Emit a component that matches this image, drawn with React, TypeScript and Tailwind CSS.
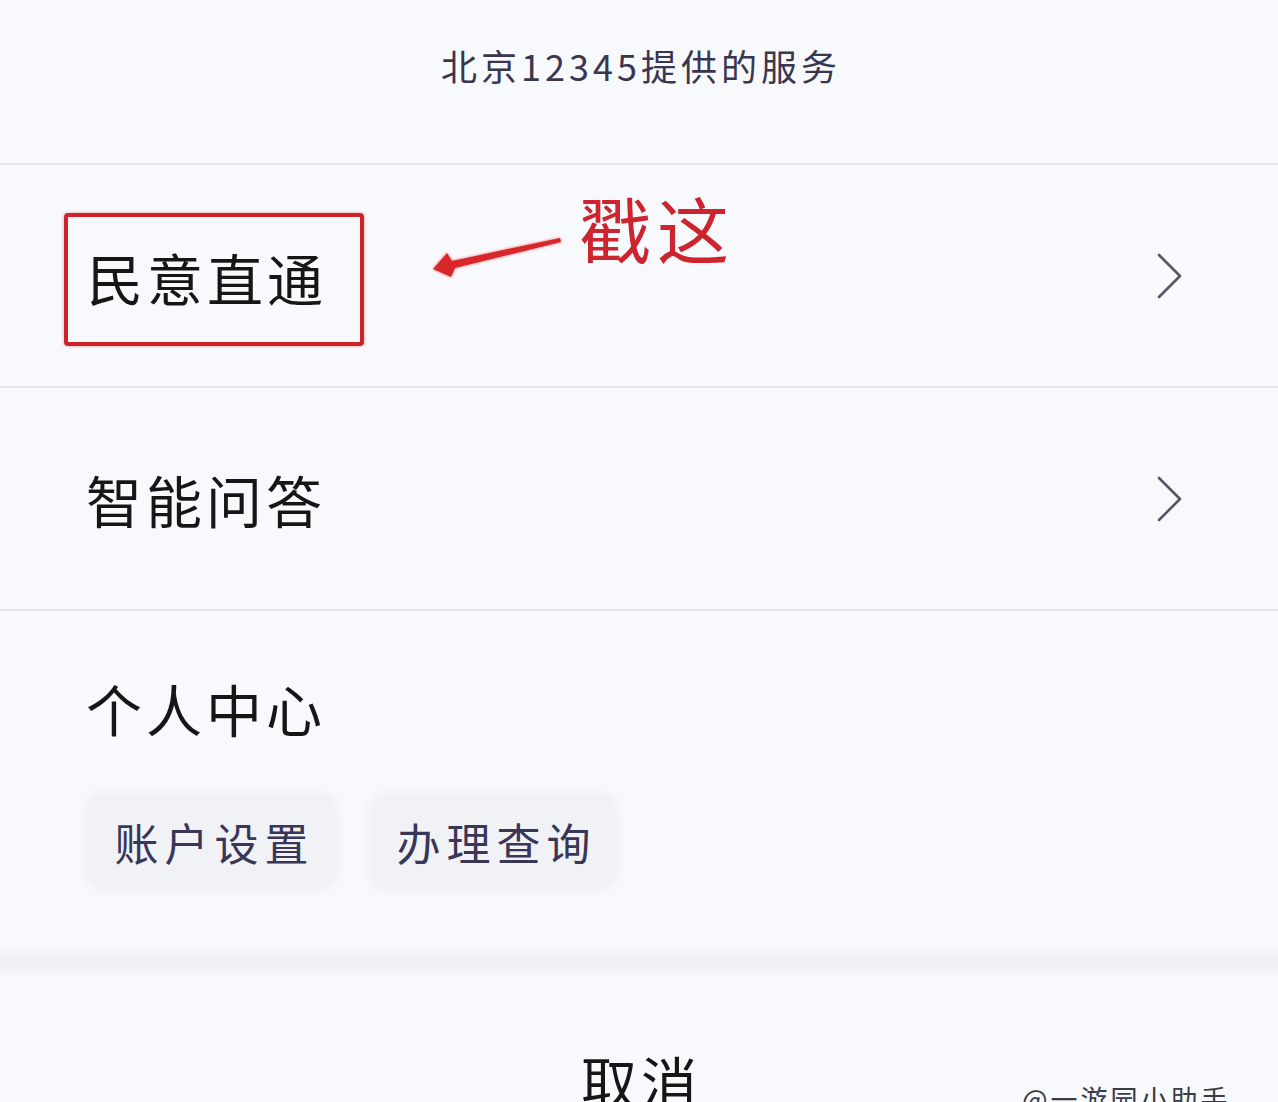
import React from "react";

const font = { fontFamily: '"Noto Sans CJK SC", "Noto Sans", sans-serif' };

function Chevron() {
  return (
    <svg width="28" height="46" viewBox="0 0 28 46" className="shrink-0">
      <path d="M3 2 L24 23 L3 44" fill="none" stroke="#5a5566" strokeWidth="2.6" strokeLinecap="round" strokeLinejoin="round" />
    </svg>
  );
}

export default function App() {
  return (
    <div
      className="relative w-[1278px] h-[1102px] overflow-hidden bg-[#f8f9fc] text-[#161616]"
      style={font}
    >
      {/* Header */}
      <div className="h-[165px] border-b-2 border-[#e3e6ec] flex justify-center pt-[47px]">
        <div className="text-[36px] leading-[36px] tracking-[4px] pl-[4px] text-[#3a3650]">北京12345提供的服务</div>
      </div>

      {/* Row 1 */}
      <div className="relative h-[223px] border-b-2 border-[#e3e6ec] flex items-center justify-between pl-[64px] pr-[94px]">
        <div className="w-[300px] h-[133px] mt-[8px] border-[4px] border-[#cf2229] rounded-[4px] flex items-center pl-[19px] shadow-[0_0_3px_rgba(220,40,40,0.5)]">
          <span className="text-[56px] leading-[56px] tracking-[4px] -mt-[6px]">民意直通</span>
        </div>
        <Chevron />
        {/* annotation */}
        <svg className="absolute left-0 top-0" width="1278" height="223" viewBox="0 165 1278 223">
          <path
            d="M560 238 L452 261 L447 253 L433 269 L451 277 L455 268 L561 242 Z"
            fill="#d8262b"
            style={{ filter: "drop-shadow(0 0 1.5px rgba(230,40,40,0.7))" }}
          />
        </svg>
        <div className="absolute left-[579px] top-[26px] text-[72px] leading-[72px] tracking-[6px] text-[#cc2530]">戳这</div>
      </div>

      {/* Row 2 */}
      <div className="h-[223px] border-b-2 border-[#e3e6ec] flex items-center justify-between pl-[86px] pr-[94px]">
        <span className="text-[56px] leading-[56px] tracking-[4px]">智能问答</span>
        <Chevron />
      </div>

      {/* Personal center */}
      <div className="h-[337px] pl-[86px] pt-[69px]">
        <div className="text-[56px] leading-[56px] tracking-[4px]">个人中心</div>
        <div className="mt-[59px] flex gap-[37px] pl-[2px]">
          <div className="w-[247px] h-[93px] rounded-[16px] bg-[#f1f2f6] shadow-[0_0_10px_4px_#f1f2f6] flex items-center justify-center">
            <span className="text-[44px] leading-[44px] tracking-[6px] text-[#393658] pl-[6px]">账户设置</span>
          </div>
          <div className="w-[243px] h-[93px] rounded-[16px] bg-[#f1f2f6] shadow-[0_0_10px_4px_#f1f2f6] flex items-center justify-center">
            <span className="text-[44px] leading-[44px] tracking-[6px] text-[#393658] pl-[6px]">办理查询</span>
          </div>
        </div>
      </div>

      {/* Separator band */}
      <div className="h-[30px] bg-gradient-to-b from-[#f6f7fa] via-[#eeeff3] to-[#f7f8fb]" />

      {/* Cancel */}
      <div className="h-[124px] flex justify-center pt-[74px]">
        <span className="text-[56px] leading-[56px] tracking-[4px] pl-[4px]">取消</span>
      </div>

      {/* watermark */}
      <div className="absolute left-[1022px] top-[1083px] text-[27px] leading-[32px] tracking-[3px] text-[#3a3a48]">@一游园小助手</div>
    </div>
  );
}
